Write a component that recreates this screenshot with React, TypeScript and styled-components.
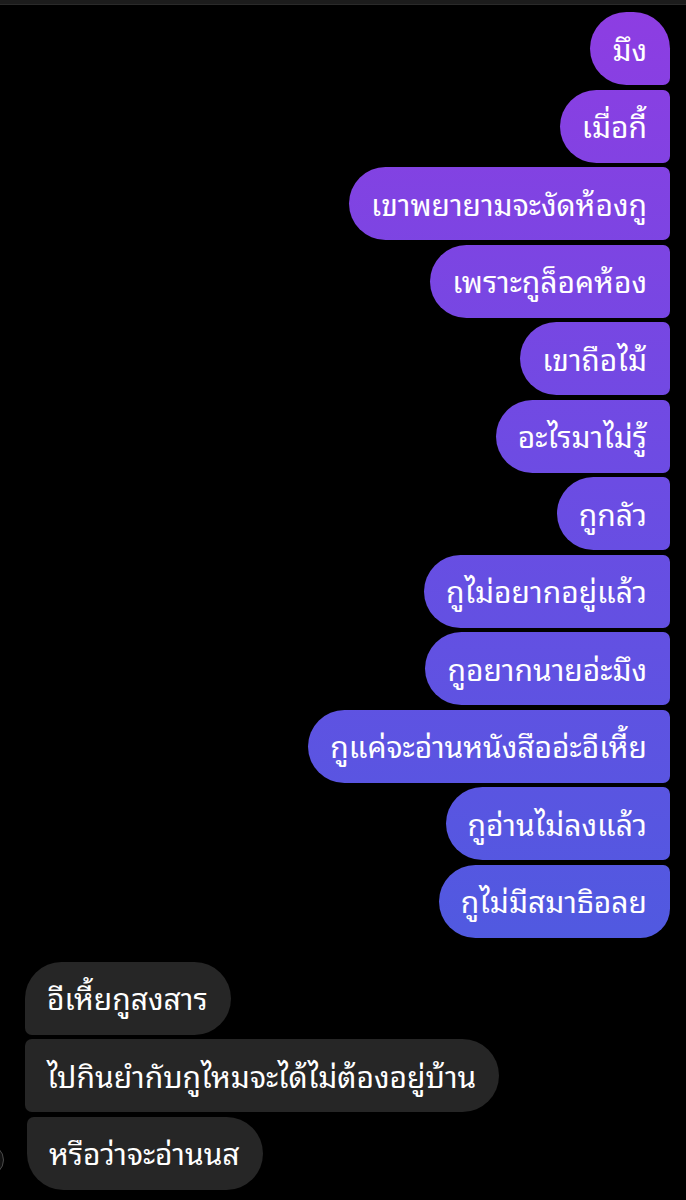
import React from 'react';
import styled, { createGlobalStyle, css } from 'styled-components';

const GlobalStyle = createGlobalStyle`
  html, body {
    margin: 0;
    padding: 0;
    background: #000;
  }
  body {
    font-family: "Noto Sans Thai Looped", "Noto Sans Thai", "Noto Sans", "DejaVu Sans", sans-serif;
    -webkit-font-smoothing: antialiased;
  }
`;

const Screen = styled.div`
  width: 686px;
  min-height: 1200px;
  background: #000;
  overflow: hidden;
`;

const TopBar = styled.div`
  height: 4px;
  background: #1c1c1c;
  border-bottom: 1px solid #2a2a2a;
`;

const Thread = styled.div`
  display: flex;
  flex-direction: column;
  gap: 24px;
  padding: 7px 16px 0 25px;
`;

const Group = styled.div<{ mine?: boolean }>`
  display: flex;
  flex-direction: column;
  align-items: ${({ mine }) => (mine ? 'flex-end' : 'flex-start')};
  gap: 4.5px;
`;

const TheirRow = styled.div`
  display: flex;
  align-items: flex-end;
`;

const Avatar = styled.div`
  width: 30px;
  height: 30px;
  margin-left: -53px;
  margin-right: 23px;
  margin-bottom: 14px;
  border-radius: 50%;
  border: 1.5px solid #4a4a4a;
  background: #111;
  flex-shrink: 0;
`;

type Pos = 'first' | 'middle' | 'last';

const Bubble = styled.div<{ mine?: boolean; pos: Pos }>`
  height: 73px;
  box-sizing: border-box;
  display: flex;
  align-items: center;
  padding: 0 23px 2px 22px;
  font-size: 30px;
  line-height: 1;
  color: #fff;
  white-space: nowrap;
  ${({ mine, pos }) =>
    mine
      ? css`
          background: linear-gradient(180deg, #8e3de2 0px, #6c4ce3 480px, #4f5ae0 960px, #4a5ce0 1200px);
          background-attachment: fixed;
          border-radius: 37px ${pos === 'first' ? '37px' : '7px'} ${pos === 'last' ? '30px' : '7px'} 37px;
        `
      : css`
          background: #262626;
          border-radius: ${pos === 'first' ? '37px' : '7px'} 37px 37px ${pos === 'last' ? '37px' : '7px'};
        `}
`;

const mine = [
  'มึง',
  'เมื่อกี้',
  'เขาพยายามจะงัดห้องกู',
  'เพราะกูล็อคห้อง',
  'เขาถือไม้',
  'อะไรมาไม่รู้',
  'กูกลัว',
  'กูไม่อยากอยู่แล้ว',
  'กูอยากนายอ่ะมึง',
  'กูแค่จะอ่านหนังสืออ่ะอีเหี้ย',
  'กูอ่านไม่ลงแล้ว',
  'กูไม่มีสมาธิอลย',
];

const theirs = ['อีเหี้ยกูสงสาร', 'ไปกินยำกับกูไหมจะได้ไม่ต้องอยู่บ้าน', 'หรือว่าจะอ่านนส'];

const posOf = (i: number, n: number): Pos => (i === 0 ? 'first' : i === n - 1 ? 'last' : 'middle');

export default function App() {
  return (
    <Screen>
      <GlobalStyle />
      <TopBar />
      <Thread>
        <Group mine>
          {mine.map((t, i) => (
            <Bubble key={i} mine pos={posOf(i, mine.length)}>
              {t}
            </Bubble>
          ))}
        </Group>
        <Group>
          {theirs.map((t, i) => (
            <TheirRow key={i}>
              {i === theirs.length - 1 && <Avatar />}
              <Bubble pos={posOf(i, theirs.length)}>{t}</Bubble>
            </TheirRow>
          ))}
        </Group>
      </Thread>
    </Screen>
  );
}
